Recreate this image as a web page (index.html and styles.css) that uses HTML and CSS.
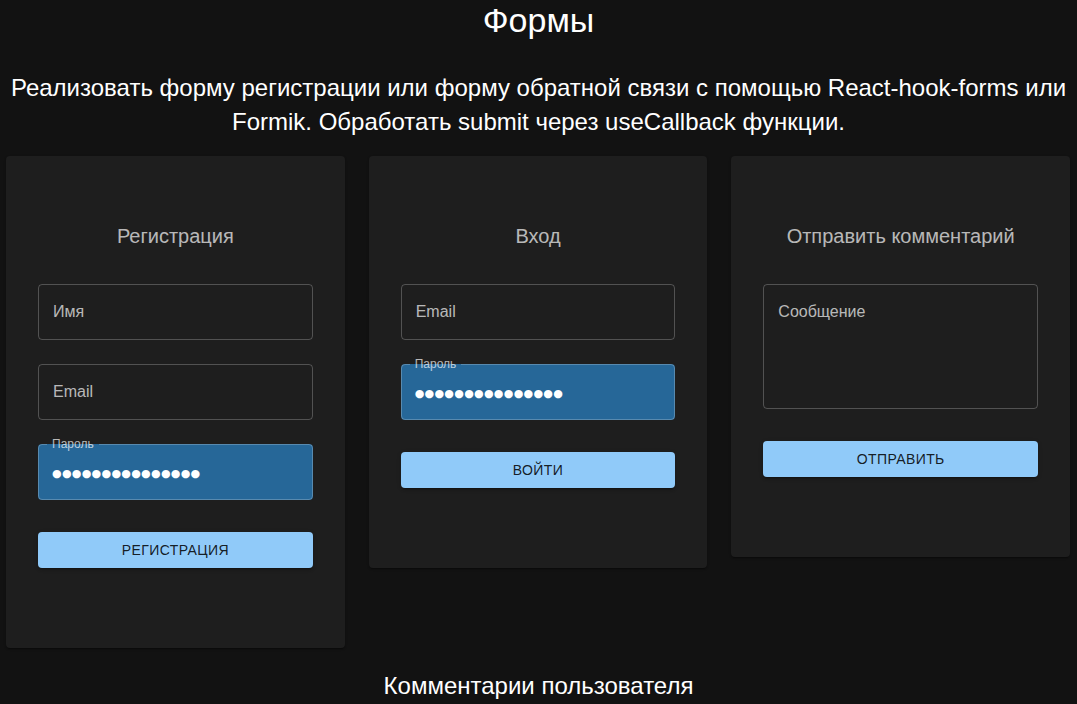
FILE: index.html
```html
<!DOCTYPE html>
<html lang="ru">
<head>
<meta charset="utf-8">
<title>Формы</title>
<link rel="stylesheet" href="styles.css">
</head>
<body>
<main class="page">
  <h1 class="page-title">Формы</h1>
  <p class="task">Реализовать форму регистрации или форму обратной связи с помощью React-hook-forms или Formik. Обработать submit через useCallback функции.</p>

  <section class="cards">
    <form class="card">
      <h2 class="card-title">Регистрация</h2>
      <div class="fields">
        <input class="input" type="text" placeholder="Имя">
        <input class="input" type="email" placeholder="Email">
        <div class="field filled">
          <label class="float-label">Пароль</label>
          <div class="input autofill"><span class="dots">●●●●●●●●●●●●●●●</span></div>
          <fieldset class="outline"><legend><span>Пароль</span></legend></fieldset>
        </div>
      </div>
      <button class="btn" type="button">Регистрация</button>
    </form>

    <form class="card">
      <h2 class="card-title">Вход</h2>
      <div class="fields">
        <input class="input" type="email" placeholder="Email">
        <div class="field filled">
          <label class="float-label">Пароль</label>
          <div class="input autofill"><span class="dots">●●●●●●●●●●●●●●●</span></div>
          <fieldset class="outline"><legend><span>Пароль</span></legend></fieldset>
        </div>
      </div>
      <button class="btn" type="button">Войти</button>
    </form>

    <form class="card">
      <h2 class="card-title">Отправить комментарий</h2>
      <div class="fields">
        <textarea class="input textarea" placeholder="Сообщение"></textarea>
      </div>
      <button class="btn" type="button">Отправить</button>
    </form>
  </section>

  <h2 class="comments-title">Комментарии пользователя</h2>
</main>
</body>
</html>
```

FILE: styles.css
```css
* { box-sizing: border-box; }

html, body {
  margin: 0;
  padding: 0;
  background: #121212;
  color: #fff;
  font-family: "Liberation Sans", Arial, sans-serif;
  overflow: hidden;
}

.page {
  display: flex;
  flex-direction: column;
  align-items: stretch;
}

.page-title {
  margin: 0;
  text-align: center;
  font-size: 34px;
  font-weight: 400;
  line-height: 40px;
}

.task {
  margin: 31px 0 17px;
  text-align: center;
  font-size: 24px;
  line-height: 34px;
  padding: 0 6px;
}

.cards {
  display: flex;
  align-items: flex-start;
  gap: 24px;
  padding: 0 7px 0 6px;
}

.card {
  flex: 1 1 0;
  min-width: 0;
  margin: 0;
  background: #1e1e1e;
  border-radius: 4px;
  box-shadow: 0 2px 1px -1px rgba(0,0,0,0.2), 0 1px 1px 0 rgba(0,0,0,0.14), 0 1px 3px 0 rgba(0,0,0,0.12);
  padding: 64px 32px 80px;
  display: flex;
  flex-direction: column;
}

.card-title {
  margin: 0 0 32px;
  text-align: center;
  font-size: 20px;
  font-weight: 400;
  line-height: 32px;
  color: rgba(255,255,255,0.7);
}

.fields {
  display: flex;
  flex-direction: column;
  gap: 24px;
  margin-bottom: 32px;
}

.input {
  display: block;
  width: 100%;
  height: 56px;
  margin: 0;
  padding: 16.5px 14px;
  background: transparent;
  border: 1px solid rgba(255,255,255,0.23);
  border-radius: 4px;
  color: #fff;
  font-family: inherit;
  font-size: 16px;
  line-height: 23px;
  outline: none;
}

.input::placeholder {
  color: rgba(255,255,255,0.7);
  opacity: 1;
}

.textarea {
  height: 125px;
  padding-top: 14.5px;
  resize: none;
}

.field {
  position: relative;
  height: 56px;
}

.autofill {
  border: none;
  background: #266798;
  display: flex;
  align-items: center;
  padding: 0 14px;
}

.dots {
  font-family: "DejaVu Sans", sans-serif;
  font-size: 11px;
  letter-spacing: 0.3px;
  color: #fff;
  line-height: 1;
  position: relative;
  top: 1px;
}

.outline {
  position: absolute;
  left: 0;
  right: 0;
  top: -5px;
  bottom: 0;
  margin: 0;
  padding: 0 8px;
  border: 1px solid rgba(255,255,255,0.23);
  border-radius: 4px;
  pointer-events: none;
  min-width: 0;
}

.outline legend {
  float: unset;
  width: auto;
  padding: 0;
  height: 11px;
  font-size: 12px;
  visibility: hidden;
  max-width: 100%;
  white-space: nowrap;
  display: block;
}

.outline legend span {
  padding: 0 5px;
  display: inline-block;
}

.float-label {
  position: absolute;
  left: 14px;
  top: -7px;
  font-size: 12px;
  line-height: 14px;
  color: rgba(255,255,255,0.7);
  z-index: 1;
}

.btn {
  display: block;
  width: 100%;
  height: 36px;
  margin: 0;
  border: none;
  border-radius: 4px;
  background: #90caf9;
  color: rgba(0,0,0,0.87);
  font-family: inherit;
  font-size: 14px;
  font-weight: 400;
  letter-spacing: 0.4px;
  text-transform: uppercase;
  box-shadow: 0 3px 1px -2px rgba(0,0,0,0.2), 0 2px 2px 0 rgba(0,0,0,0.14), 0 1px 5px 0 rgba(0,0,0,0.12);
  cursor: pointer;
}

.comments-title {
  margin: 22px 0 0;
  text-align: center;
  font-size: 24px;
  font-weight: 400;
  line-height: 32px;
}
```
